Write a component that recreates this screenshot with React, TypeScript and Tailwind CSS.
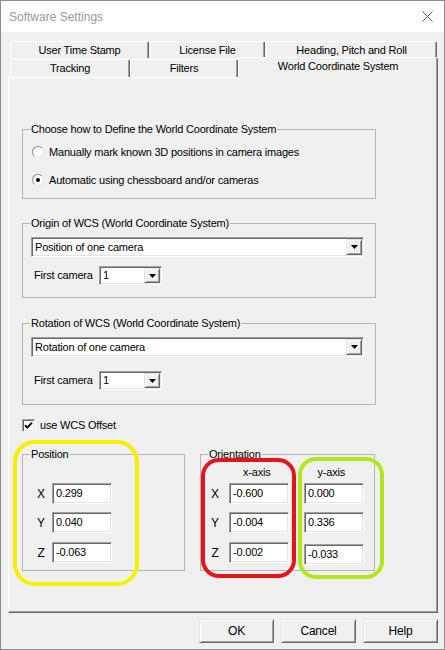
import type { ReactNode } from "react";

const sunken =
  "border border-t-[#a0a0a0] border-l-[#a0a0a0] border-r-white border-b-white shadow-[inset_1px_1px_0_#696969,inset_-1px_-1px_0_#e3e3e3] bg-white";
const raised =
  "border border-t-[#e3e3e3] border-l-[#e3e3e3] border-r-[#696969] border-b-[#696969] shadow-[inset_1px_1px_0_#fff,inset_-1px_-1px_0_#a0a0a0] bg-[#f0f0f0]";

function Tab({ label, className }: { label: string; className: string }) {
  return (
    <div
      className={`flex items-center justify-center rounded-t-[2px] border-t border-l border-r border-t-white border-l-white border-r-[#696969] bg-[#f0f0f0] shadow-[inset_-1px_0_0_#a0a0a0] ${className}`}
    >
      {label}
    </div>
  );
}

function Combo({ text, className }: { text: string; className: string }) {
  return (
    <div className={`flex items-stretch ${sunken} ${className}`}>
      <span className="flex flex-1 items-center pl-[3px]">{text}</span>
      <span className={`m-[1px] flex w-[16px] items-center justify-center ${raised}`}>
        <svg width="7" height="4" viewBox="0 0 7 4">
          <path d="M0 0h7L3.5 4z" fill="#000" />
        </svg>
      </span>
    </div>
  );
}

function Field({ value, className = "" }: { value: string; className?: string }) {
  return (
    <div className={`flex h-[21px] w-[60px] items-center pl-[3px] ${sunken} ${className}`}>
      {value}
    </div>
  );
}

function Group({ title, className, children }: { title: string; className: string; children: ReactNode }) {
  return (
    <fieldset className={`border border-[#b4b4b4] ${className}`}>
      <legend className="ml-[7px] px-[1px] leading-[14px]">{title}</legend>
      {children}
    </fieldset>
  );
}

function Radio({ checked, label }: { checked?: boolean; label: string }) {
  return (
    <div className="flex h-[16px] items-center pl-[9px]">
      <span className="flex h-[12px] w-[12px] items-center justify-center rounded-full border border-t-[#8a8a8a] border-l-[#8a8a8a] border-r-[#e3e3e3] border-b-[#e3e3e3] bg-white">
        {checked && <span className="h-[4px] w-[4px] rounded-full bg-black" />}
      </span>
      <span className="ml-[5px]">{label}</span>
    </div>
  );
}

export default function App() {
  const position = [
    ["X", "0.299"],
    ["Y", "0.040"],
    ["Z", "-0.063"],
  ];
  const orientation = [
    ["X", "-0.600", "0.000"],
    ["Y", "-0.004", "0.336"],
    ["Z", "-0.002", "-0.033"],
  ];

  return (
    <div className="h-[650px] w-[445px] border border-[#8c8c8c] bg-[#f0f0f0] font-['Liberation_Sans',Arial,sans-serif] text-[11px] tracking-[-0.2px] text-black">
      {/* title bar */}
      <div className="flex h-[31px] items-center justify-between bg-white pl-[8px] pr-[11px]">
        <span className="text-[12px] tracking-normal text-[#999]">Software Settings</span>
        <svg width="11" height="11" viewBox="0 0 11 11">
          <path d="M0.5 0.5l10 10M10.5 0.5l-10 10" stroke="#555" strokeWidth="1" />
        </svg>
      </div>

      {/* tabs */}
      <div className="mt-[9px] pl-[9px]">
        <div className="flex h-[17px]">
          <Tab label="User Time Stamp" className="h-[17px] w-[139px]" />
          <Tab label="License File" className="ml-[1px] h-[17px] w-[115px]" />
          <Tab label="Heading, Pitch and Roll" className="ml-[1px] h-[17px] w-[171px]" />
        </div>
        <div className="flex h-[19px]">
          <Tab label="Tracking" className="mt-[1px] h-[18px] w-[120px]" />
          <Tab label="Filters" className="mt-[1px] h-[18px] w-[108px]" />
          <Tab label="World Coordinate System" className="relative z-10 -mt-[1px] h-[21px] w-[200px] pb-[3px]" />
        </div>
      </div>

      {/* tab page */}
      <div className="relative ml-[7px] h-[536px] w-[430px] border border-t-white border-l-white border-r-[#696969] border-b-[#696969] shadow-[inset_-1px_-1px_0_#a0a0a0]">
        <div className="flex flex-col pl-[13px]">
          <Group title="Choose how to Define the World Coordinate System" className="mt-[44px] w-[354px] pb-[10px]">
            <div className="flex flex-col pt-[8px]">
              <Radio label="Manually mark known 3D positions in camera images" />
              <div className="mt-[12px]">
                <Radio checked label="Automatic using chessboard and/or cameras" />
              </div>
            </div>
          </Group>

          <Group title="Origin of WCS (World Coordinate System)" className="mt-[17px] w-[354px] pb-[12px]">
            <div className="flex flex-col pl-[8px] pt-[7px]">
              <Combo text="Position of one camera" className="h-[20px] w-[333px]" />
              <div className="mt-[9px] flex h-[19px] items-center">
                <span className="w-[68px] pl-[3px]">First camera</span>
                <Combo text="1" className="h-[19px] w-[63px]" />
              </div>
            </div>
          </Group>

          <Group title="Rotation of WCS (World Coordinate System)" className="mt-[18px] w-[354px] pb-[14px]">
            <div className="flex flex-col pl-[8px] pt-[7px]">
              <Combo text="Rotation of one camera" className="h-[20px] w-[333px]" />
              <div className="mt-[14px] flex h-[19px] items-center">
                <span className="w-[68px] pl-[3px]">First camera</span>
                <Combo text="1" className="h-[19px] w-[63px]" />
              </div>
            </div>
          </Group>

          <div className="mt-[14px] flex h-[13px] items-center">
            <span className={`flex h-[13px] w-[13px] items-center justify-center ${sunken}`}>
              <svg width="9" height="9" viewBox="0 0 9 9">
                <path d="M1 4.2l2.3 2.4L8 1.6" stroke="#000" strokeWidth="1.8" fill="none" />
              </svg>
            </span>
            <span className="ml-[5px]">use WCS Offset</span>
          </div>

          <div className="mt-[15px] flex items-start gap-[15px]">
            <Group title="Position" className="w-[163px] pb-[7px]">
              <div className="flex flex-col pt-[22px]">
                {position.map(([axis, value], i) => (
                  <div
                    key={axis}
                    className={`flex h-[21px] items-center ${i === 1 ? "mt-[8px]" : ""} ${i === 2 ? "mt-[9px]" : ""}`}
                  >
                    <span className="ml-[10px] w-[16px] text-center text-[12px]">{axis}</span>
                    <Field value={value} className="ml-[3px]" />
                  </div>
                ))}
              </div>
            </Group>

            <Group title="Orientation" className="w-[175px] pb-[7px]">
              <div className="flex flex-col pt-[4px]">
                <div className="flex h-[14px] items-center">
                  <span className="ml-[42px]">x-axis</span>
                  <span className="ml-[47px]">y-axis</span>
                </div>
                {orientation.map(([axis, x, y], i) => (
                  <div
                    key={axis}
                    className={`flex h-[21px] items-start ${i === 0 ? "mt-[4px]" : ""} ${i === 1 ? "mt-[8px]" : ""} ${i === 2 ? "mt-[9px]" : ""}`}
                  >
                    <span className="ml-[6px] flex h-[21px] w-[16px] items-center justify-center text-[12px]">
                      {axis}
                    </span>
                    <Field value={x} className="ml-[6px]" />
                    <Field value={y} className={`ml-[15px] ${i === 2 ? "mt-[2px]" : ""}`} />
                  </div>
                ))}
              </div>
            </Group>
          </div>
        </div>

        {/* highlight rings drawn over the dialog */}
        <div className="pointer-events-none absolute left-[4px] top-[362px] h-[146px] w-[126px] rounded-[22px] border-[4px] border-[#f5f000]" />
        <div className="pointer-events-none absolute left-[192px] top-[380px] h-[120px] w-[95px] rounded-[18px] border-[4px] border-[#e3141c]" />
        <div className="pointer-events-none absolute left-[289px] top-[379px] h-[122px] w-[86px] rounded-[18px] border-[4px] border-[#b5e61d]" />
      </div>

      {/* buttons */}
      <div className="mt-[6px] flex justify-end gap-[7px] pr-[6px]">
        {["OK", "Cancel", "Help"].map((b) => (
          <button key={b} type="button" className={`h-[24px] w-[75px] text-[12px] ${raised}`}>
            {b}
          </button>
        ))}
      </div>
    </div>
  );
}
